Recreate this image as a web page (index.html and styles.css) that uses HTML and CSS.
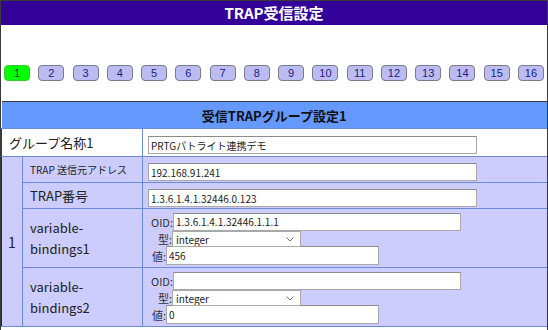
FILE: index.html
```html
<!DOCTYPE html>
<html lang="ja">
<head>
    <meta charset="UTF-8">
    <title>TRAP受信設定</title>
    <link rel="stylesheet" href="styles.css">
</head>
<body>
<div class="page">

    <header class="title-bar">TRAP受信設定</header>

    <!-- group selector -->
    <div class="group-tabs">
        <button class="tab active">1</button>
        <button class="tab">2</button>
        <button class="tab">3</button>
        <button class="tab">4</button>
        <button class="tab">5</button>
        <button class="tab">6</button>
        <button class="tab">7</button>
        <button class="tab">8</button>
        <button class="tab">9</button>
        <button class="tab">10</button>
        <button class="tab">11</button>
        <button class="tab">12</button>
        <button class="tab">13</button>
        <button class="tab">14</button>
        <button class="tab">15</button>
        <button class="tab">16</button>
    </div>

    <table class="settings">
        <colgroup>
            <col class="col-no">
            <col class="col-label">
            <col>
        </colgroup>
        <tr class="row-head">
            <th colspan="3">受信TRAPグループ設定1</th>
        </tr>
        <tr class="row-name">
            <td colspan="2" class="label label-big">グループ名称1</td>
            <td class="value"><input class="text wide" type="text" value="PRTGパトライト連携デモ"></td>
        </tr>
        <tr class="row-std">
            <td rowspan="4" class="no">1</td>
            <td class="label label-small">TRAP 送信元アドレス</td>
            <td class="value"><input class="text wide" type="text" value="192.168.91.241"></td>
        </tr>
        <tr class="row-std">
            <td class="label">TRAP番号</td>
            <td class="value"><input class="text wide" type="text" value="1.3.6.1.4.1.32446.0.123"></td>
        </tr>
        <tr class="row-bind">
            <td class="label">variable-<br>bindings1</td>
            <td class="value bind">
                <div class="line"><span class="key key-oid">OID:</span><input class="text oid" type="text" value="1.3.6.1.4.1.32446.1.1.1"></div>
                <div class="line"><span class="key key-type">型:</span>
                    <span class="select-wrap">
                        <select class="type"><option>integer</option></select>
                        <svg class="chevron" width="8" height="5" viewBox="0 0 8 5"><path d="M0.5 0.5 L4 4 L7.5 0.5" fill="none" stroke="#777" stroke-width="1"/></svg>
                    </span>
                </div>
                <div class="line"><span class="key key-val">値:</span><input class="text val" type="text" value="456"></div>
            </td>
        </tr>
        <tr class="row-bind">
            <td class="label">variable-<br>bindings2</td>
            <td class="value bind">
                <div class="line"><span class="key key-oid">OID:</span><input class="text oid" type="text" value=""></div>
                <div class="line"><span class="key key-type">型:</span>
                    <span class="select-wrap">
                        <select class="type"><option>integer</option></select>
                        <svg class="chevron" width="8" height="5" viewBox="0 0 8 5"><path d="M0.5 0.5 L4 4 L7.5 0.5" fill="none" stroke="#777" stroke-width="1"/></svg>
                    </span>
                </div>
                <div class="line"><span class="key key-val">値:</span><input class="text val" type="text" value="0"></div>
            </td>
        </tr>
    </table>

</div>
</body>
</html>
```

FILE: styles.css
```css
body {
    margin: 0;
    font-family: "Noto Sans CJK JP", "Noto Sans", sans-serif;
    color: #222;
    background-color: #ffffff;
    overflow: hidden;
}

.page {
    width: 548px;
    height: 340px;
    box-sizing: border-box;
    border: 1px solid #3a3a3a;
    overflow: hidden;
}

/* Title bar */
.title-bar {
    height: 24px;
    line-height: 24px;
    background-color: #330099;
    color: #ffffff;
    font-size: 15px;
    font-weight: bold;
    text-align: center;
}

/* Group buttons */
.group-tabs {
    display: flex;
    justify-content: space-between;
    padding: 40px 3px 20px 3px;
}

.tab {
    width: 26px;
    height: 16px;
    padding: 0;
    border: 1px solid #7a7a8a;
    border-radius: 4px;
    background-color: #bcbcf2;
    color: #20207a;
    font-family: "Liberation Sans", Arial, sans-serif;
    font-size: 11px;
    line-height: 14px;
}

.tab.active {
    background-color: #00ff00;
    border-color: #33cc33;
    color: #1a3a1a;
}

/* Settings table */
.settings {
    width: 100%;
    border-collapse: collapse;
    table-layout: fixed;
}

.col-no {
    width: 21px;
}

.col-label {
    width: 120px;
}

.settings th,
.settings td {
    border: 1px solid #6c8bd6;
    padding: 0;
}

.settings tr:first-child th {
    border-top-color: #3a3a3a;
}

.settings td:first-child,
.settings th {
    border-left: none;
}

.settings td:last-child,
.settings th {
    border-right: none;
}

.row-head th {
    height: 26px;
    background-color: #6699ff;
    color: #111;
    font-size: 13px;
    font-weight: bold;
    text-align: center;
}

.row-name td {
    height: 27px;
    background-color: #ffffff;
}

.row-std td,
.row-bind td,
.no {
    background-color: #ccccff;
}

.row-std td {
    height: 25px;
}

.row-bind td {
    height: 57px;
}

.no {
    text-align: center;
    font-size: 14px;
    border-left: 1px solid #22226a !important;
}

.label {
    padding-left: 7px !important;
    font-size: 13px;
    line-height: 21px;
}

.label-big {
    font-size: 13px;
    border-left: 1px solid #3a3a3a !important;
}

.label-small {
    font-size: 10px;
}

.value {
    padding-left: 5px !important;
}

/* Inputs */
.text {
    box-sizing: border-box;
    height: 18px;
    margin: 0;
    padding: 0 2px;
    border: 1px solid #a8a8a8;
    border-top-color: #8c8c8c;
    background-color: #ffffff;
    font-family: "Noto Sans CJK JP", "Noto Sans", sans-serif;
    font-size: 10px;
    color: #222;
    vertical-align: middle;
}

.wide {
    width: 329px;
}

.bind {
    padding-top: 1px !important;
}

.line {
    display: flex;
    align-items: center;
    height: 17px;
}

.key {
    box-sizing: border-box;
    text-align: right;
    font-size: 11px;
    color: #333;
}

.key-oid {
    width: 25px;
}

.key-type {
    width: 24px;
}

.key-val {
    width: 18px;
}

.oid {
    width: 288px;
}

.val {
    width: 213px;
    height: 19px;
}

.select-wrap {
    position: relative;
    display: flex;
    align-items: center;
}

.type {
    appearance: none;
    box-sizing: border-box;
    width: 129px;
    height: 16px;
    margin: 0;
    padding: 0 3px;
    border: 1px solid #a8a8a8;
    border-radius: 0;
    background-color: #ffffff;
    font-family: "Noto Sans CJK JP", "Noto Sans", sans-serif;
    font-size: 10px;
    color: #222;
}

.chevron {
    position: absolute;
    right: 7px;
    top: 6px;
}
```
